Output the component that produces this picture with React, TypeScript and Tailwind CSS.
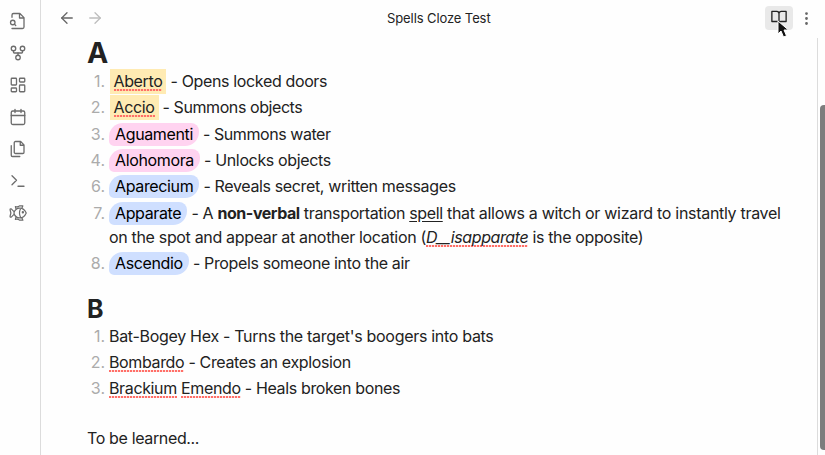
import React from "react";
import { ArrowLeft, ArrowRight, Calendar, GitFork, LayoutDashboard, MoreVertical } from "lucide-react";

const mis = "bg-[linear-gradient(90deg,#ff6f68_2px,#ff6f6833_2px)] bg-[length:3px_2px] bg-repeat-x bg-[position:0_100%]";
const pill = "rounded-[14px_8px_14px_5px] px-[6px] pb-[2px] pt-[1px] text-black";
const mark = "ml-[0.5px] bg-[#ffebb3] px-1 py-[2.5px]";

function Row({ n, tall, children }: { n: string; tall?: boolean; children: React.ReactNode }) {
  return (
    <li className={`flex ${tall ? "h-[50.8px]" : "h-[26.3px]"}`}>
      <span className="w-[22px] shrink-0 pr-[4px] text-right tracking-normal text-[#ababab]">{n}</span>
      <div className="whitespace-nowrap">{children}</div>
    </li>
  );
}

export default function App() {
  return (
    <div className="flex h-[455px] w-[825px] overflow-hidden bg-[#fefefe] font-['Inter',sans-serif] text-[#222]">
      <nav className="flex w-[41px] shrink-0 flex-col items-center gap-[14px] border-r border-[#dcdcdc] pr-1 pt-[12px] text-[#6c6c6c]">
        <svg width="18" height="18" viewBox="0 0 24 24" fill="none" stroke="currentColor" strokeWidth="1.75" strokeLinecap="round" strokeLinejoin="round"><path d="M4 22h14a2 2 0 0 0 2-2V7.500L14.500 2H6a2 2 0 0 0-2 2v3M14 2v6h6M9 18l-1.500-1.500" /><circle cx="5" cy="14" r="3" /></svg>
        <GitFork size={18} strokeWidth={1.75} />
        <LayoutDashboard size={18} strokeWidth={1.75} />
        <Calendar size={18} strokeWidth={1.75} />
        <svg width="18" height="18" viewBox="0 0 24 24" fill="none" stroke="currentColor" strokeWidth="1.75" strokeLinecap="round" strokeLinejoin="round"><path d="M15.500 2H8.600a1.600 1.600 0 0 0-1.600 1.600v12.800A1.600 1.600 0 0 0 8.600 18h9.800a1.600 1.600 0 0 0 1.600-1.600V6.500zM15 2v5h5M3 7.600v12.800A1.600 1.600 0 0 0 4.600 22h9.800" /></svg>
        <svg width="18" height="18" viewBox="0 0 24 24" fill="none" stroke="currentColor" strokeWidth="1.75" strokeLinecap="round" strokeLinejoin="round"><path d="m4 17 6-6-6-6M12 19h8" /></svg>
        <svg width="18" height="18" viewBox="0 0 24 24" fill="none" stroke="currentColor" strokeWidth="1.600" strokeLinejoin="round"><path d="M6.500 12C9 3.500 19 3 23 12c-4 9-14 8.500-16.500 0zM7 10.500 3 6.500Q1 6 1.500 8l1 4-1 4q-.500 2 1.500 1.500l4-4M9.500 7.500 8.500 3.500Q12 4.500 14 2.500h4.500L17 6M9.500 16.500l-1 4q3.500-1 5.500 1h4.500L17 18M15.500 6q-3 6 0 12" /><circle cx="18.500" cy="11" r=".8" /></svg>
      </nav>
      <main className="flex min-w-0 flex-1 flex-col">
        <header className="flex h-[38px] shrink-0 items-center pb-[2px]">
          <ArrowLeft size={18} strokeWidth={1.75} className="ml-[17px] text-[#666]" />
          <ArrowRight size={18} strokeWidth={1.75} className="ml-[10px] text-[#bdbdbd]" />
          <h1 className="ml-[283px] w-[104px] whitespace-nowrap pt-px text-[13px] tracking-[-0.1px]">Spells Cloze Test</h1>
          <div className="relative ml-[274px] flex h-6 w-7 items-center justify-center rounded bg-[#e9e9e9]">
            <svg width="18" height="18" viewBox="0 0 24 24" fill="none" stroke="currentColor" strokeWidth="1.750" strokeLinecap="round" strokeLinejoin="round" className="mb-[2px]"><path d="M2.500 4.500H9a3 3 0 0 1 3 3V20a2.500 2.500 0 0 0-2.500-2h-7zM21.500 4.500H15a3 3 0 0 0-3 3V20a2.500 2.500 0 0 1 2.500-2h7z" /></svg>
            <svg className="absolute left-3 top-[14px]" width="13" height="19" viewBox="0 0 13 19"><path d="M1 1v13l3-3 2.500 6 3-1.200L7 10h4.500z" fill="#111" stroke="#fff" /></svg>
          </div>
          <MoreVertical size={17} className="ml-[5px] text-[#666]" />
        </header>
        <div className="flex flex-1">
          <article className="w-[777px] border-r border-[#dcdcdc] pl-[46px] text-base leading-6 tracking-[-0.36px]">
            <h2 className="-mt-[2px] h-[33.2px] text-[28.5px] font-bold leading-[33px]">A</h2>
            <ol>
              <Row n="1."><span className={mark}><span className={mis}>Aberto</span></span> - Opens locked doors</Row>
              <Row n="2."><span className={mark}><span className={mis}>Accio</span></span><span className="tracking-[-0.42px]"> - Summons objects</span></Row>
              <Row n="3."><span className={`${pill} bg-[#ffd3f0]`}>Aguamenti</span><span className="tracking-[-0.44px]"> - Summons water</span></Row>
              <Row n="4."><span className={`${pill} bg-[#ffd3f0]`}>Alohomora</span> - Unlocks objects</Row>
              <Row n="6."><span className={`${pill} bg-[#cfdfff]`}>Aparecium</span> - Reveals secret, written messages</Row>
              <Row n="7." tall><span className={`${pill} bg-[#cfdfff]`}>Apparate</span> - A <b className="tracking-[-0.44px]">non-verbal</b> transportation <u className="underline-offset-2">spell</u><span className="tracking-[-0.3px]"> that allows a witch or wizard to instantly travel</span><br /><span className="tracking-[-0.33px]">on the spot and appear at another location (</span><i className={`${mis} tracking-[-0.4px]`}>D__isapparate</i> is the opposite)</Row>
              <Row n="8."><span className={`${pill} bg-[#cfdfff]`}>Ascendio</span> - Propels someone into the air</Row>
            </ol>
            <h2 className="mt-[14px] h-[32px] text-[25px] font-bold leading-[34px]">B</h2>
            <ol>
              <Row n="1."><span className="tracking-[-0.3px]">Bat-Bogey Hex - Turns the target's boogers into bats</span></Row>
              <Row n="2."><span className={mis}>Bombardo</span> - Creates an explosion</Row>
              <Row n="3."><span className={mis}>Brackium</span> <span className={mis}>Emendo</span> - Heals broken bones</Row>
            </ol>
            <p className="mt-[23px]">To be learned...</p>
          </article>
          <div className="ml-[2px] mt-[67px] h-[345px] w-[5px] rounded-l bg-[#7d7d7d]" />
        </div>
      </main>
    </div>
  );
}
